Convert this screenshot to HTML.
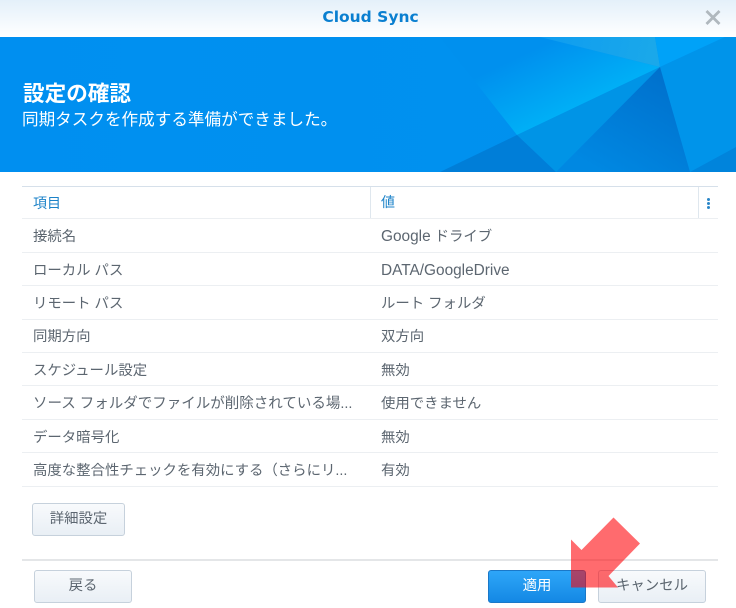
<!DOCTYPE html>
<html lang="ja">
<head>
<meta charset="utf-8">
<style>
html,body{margin:0;padding:0;background:#fff}
#p{position:relative;width:736px;height:608px;overflow:hidden;background:#fff;font-family:"Liberation Sans","Noto Sans CJK JP",sans-serif;font-size:14.4px;color:#5c6670}
#p div{position:absolute;white-space:nowrap}
#p span{font-size:15.4px}
.tb{left:0;top:0;width:736px;height:37px;background:linear-gradient(#e4f0fa,#fff)}
.ttl{left:0;width:741px;top:7px;text-align:center;font-weight:bold;color:#0a7fd0;line-height:20px;font-family:"DejaVu Sans","Liberation Sans",sans-serif;font-size:15.500px}
.ln{left:22px;width:696px;height:1px;background:#eceff2}
.c1,.c2{line-height:20px;height:20px}
.c1{left:33px}
.c2{left:381px}
.h{color:#1b82c8;font-size:14px}
.btn{box-sizing:border-box;height:33px;border:1px solid #c6d1dc;border-radius:3px;background:linear-gradient(#f8fafc,#e9eff5);text-align:center;line-height:31px;color:#5c6670}
</style>
</head>
<body>
<div id="p">
<div class="tb"></div>
<div class="ttl">Cloud Sync</div>
<svg style="position:absolute;left:704px;top:9px" width="18" height="17" viewBox="0 0 18 17"><path d="M2.500 2 L15.500 15 M15.500 2 L2.500 15" stroke="#b0b8be" stroke-width="2.800" fill="none"/></svg>

<svg style="position:absolute;left:0;top:37px" width="736" height="135" viewBox="0 0 736 135">
<defs>
<linearGradient id="a" x1="0" y1="0" x2="1" y2="0"><stop offset="0" stop-color="#008ff0"/><stop offset="1" stop-color="#0092ee"/></linearGradient>
<linearGradient id="b" gradientUnits="userSpaceOnUse" x1="558" y1="1" x2="588" y2="64"><stop offset="0" stop-color="#0090ee"/><stop offset="1" stop-color="#00aff6"/></linearGradient>
<linearGradient id="c" gradientUnits="userSpaceOnUse" x1="660" y1="30" x2="600" y2="135"><stop offset="0" stop-color="#0070cc"/><stop offset="1" stop-color="#0088e2"/></linearGradient>
<linearGradient id="d" gradientUnits="userSpaceOnUse" x1="540" y1="0" x2="650" y2="25"><stop offset="0" stop-color="#0e9cf0"/><stop offset="1" stop-color="#1aa8ea"/></linearGradient>
</defs>
<rect width="736" height="135" fill="url(#a)"/>
<polygon points="440,0 540,0 660,30 517,98" fill="url(#b)"/>
<polygon points="540,0 660,30 655,0" fill="url(#d)"/>
<polygon points="655,0 660,30 725,0" fill="#00a2f8"/>
<polygon points="725,0 736,0 736,135 690,135 660,30" fill="#0094ea"/>
<polygon points="660,30 517,98 556,135" fill="#0094e6"/>
<polygon points="517,98 440,135 556,135" fill="#007ed8"/>
<polygon points="660,30 556,135 690,135" fill="url(#c)"/>
<polygon points="736,110 690,135 736,135" fill="#0084dc"/>
</svg>
<div style="left:23px;top:81px;font-size:21.600px;font-weight:bold;color:#fff;line-height:26px">設定の確認</div>
<div style="left:22px;top:109px;font-size:16.600px;color:#fff;line-height:22px">同期タスクを作成する準備ができました。</div>

<div class="ln" style="top:186px;background:#d6e0ea"></div>
<div class="ln" style="top:218px"></div>
<div class="ln" style="top:252px"></div>
<div class="ln" style="top:285px"></div>
<div class="ln" style="top:319px"></div>
<div class="ln" style="top:352px"></div>
<div class="ln" style="top:385px"></div>
<div class="ln" style="top:419px"></div>
<div class="ln" style="top:452px"></div>
<div class="ln" style="top:486px"></div>
<div style="left:370px;top:187px;width:1px;height:31px;background:#dfe7ee"></div>
<div style="left:698px;top:187px;width:1px;height:31px;background:#dfe7ee"></div>
<div style="left:707px;top:198px;width:3px;height:3px;border-radius:2px;background:#2a86c8"></div>
<div style="left:707px;top:202px;width:3px;height:3px;border-radius:2px;background:#2a86c8"></div>
<div style="left:707px;top:205.500px;width:3px;height:3px;border-radius:2px;background:#2a86c8"></div>

<div class="c1 h" style="top:193px">項目</div><div class="c2 h" style="top:192px">値</div>
<div class="c1" style="top:227px">接続名</div><div class="c2" style="top:227px"><span>Google</span> ドライブ</div>
<div class="c1" style="top:261px">ローカル パス</div><div class="c2" style="top:261px"><span>DATA/GoogleDrive</span></div>
<div class="c1" style="top:294px">リモート パス</div><div class="c2" style="top:294px">ルート フォルダ</div>
<div class="c1" style="top:327px">同期方向</div><div class="c2" style="top:327px">双方向</div>
<div class="c1" style="top:361px">スケジュール設定</div><div class="c2" style="top:361px">無効</div>
<div class="c1" style="top:394px;font-size:14.500px">ソース フォルダでファイルが削除されている場...</div><div class="c2" style="top:394px">使用できません</div>
<div class="c1" style="top:428px">データ暗号化</div><div class="c2" style="top:428px">無効</div>
<div class="c1" style="top:461px">高度な整合性チェックを有効にする（さらにリ...</div><div class="c2" style="top:461px">有効</div>

<div class="btn" style="left:32px;top:503px;width:93px">詳細設定</div>
<div style="left:22px;top:559px;width:696px;height:2px;background:#e4e6e8"></div>
<div class="btn" style="left:34px;top:570px;width:98px">戻る</div>
<div class="btn" style="left:488px;top:570px;width:98px;background:linear-gradient(#2ea6f8,#1488e4);border-color:#1a78c8;color:#fff">適用</div>
<div class="btn" style="left:598px;top:570px;width:108px">キャンセル</div>

<svg style="position:absolute;left:0;top:0" width="736" height="608" viewBox="0 0 736 608"><polygon points="613.500,517.500 640,543.500 608.500,576 618,587.500 571,587.500 571,539.500 581.500,550" fill="#ff0005" fill-opacity=".58"/></svg>
</div>
</body>
</html>
